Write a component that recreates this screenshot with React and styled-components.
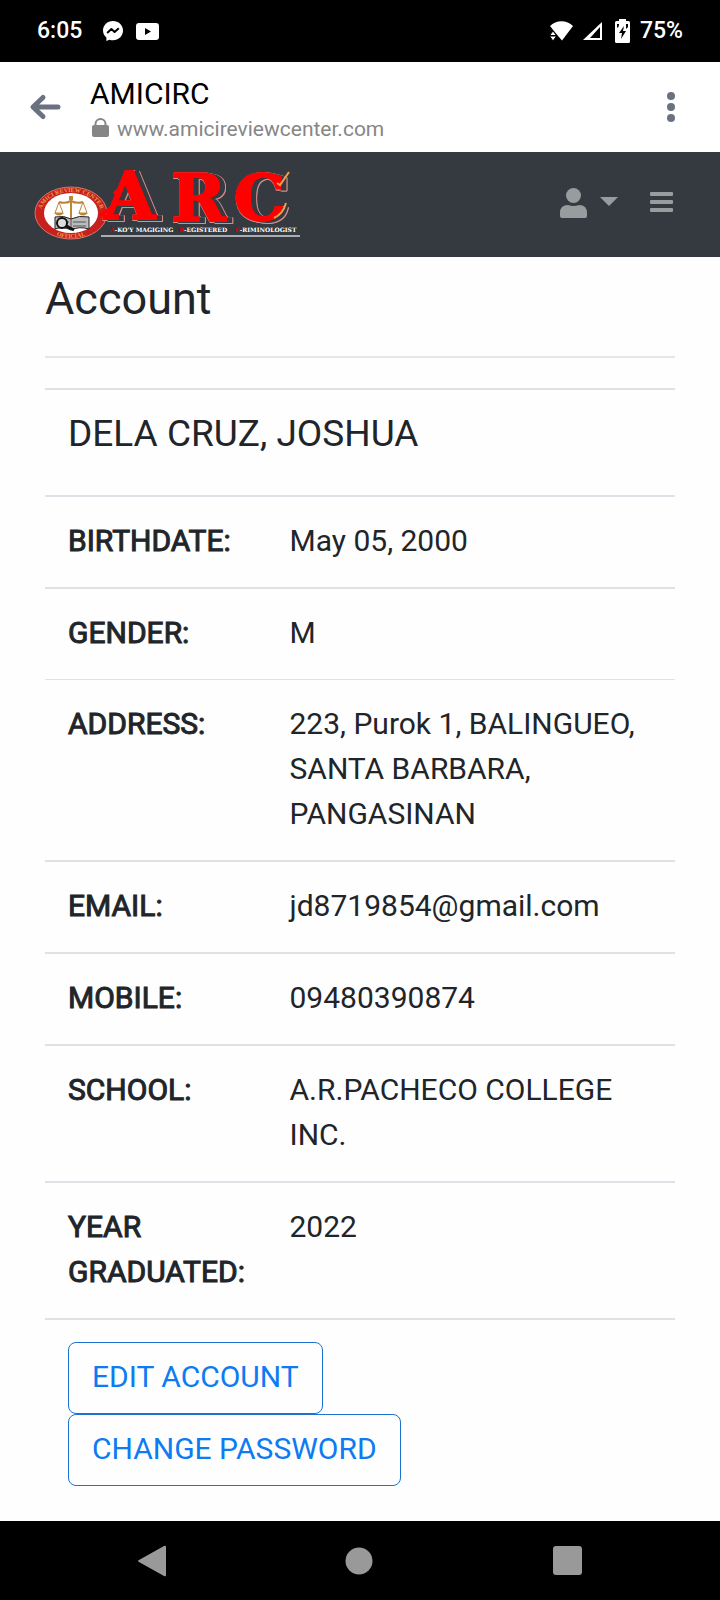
import React from 'react';
import styled, { createGlobalStyle } from 'styled-components';

const GlobalStyle = createGlobalStyle`
  * { box-sizing: border-box; }
  body {
    margin: 0;
    background: #fefefe;
    color: #212529;
    font-family: Roboto, "Liberation Sans", sans-serif;
    font-size: 30px;
    line-height: 45px;
  }
`;

const Screen = styled.div`
  display: flex;
  flex-direction: column;
  min-height: 100vh;
`;

const StatusBar = styled.header`
  display: flex;
  align-items: center;
  justify-content: space-between;
  height: 62px;
  padding: 0 37px;
  background: #000;
  color: #fff;
  font-size: 23px;
  font-weight: 500;
  line-height: 28px;
`;

const StatusGroup = styled.div`
  display: flex;
  align-items: center;
  gap: ${(p) => p.$gap}px;
`;

const Clock = styled.time`
  margin-right: 8px;
`;

const BrowserBar = styled.div`
  display: flex;
  align-items: center;
  height: 90px;
  padding: 0 28px;
  background: #fff;
`;

const IconButton = styled.button`
  display: flex;
  align-items: center;
  padding: 0;
  border: 0;
  background: none;
  color: ${(p) => p.$color || '#6a7181'};
  cursor: pointer;
`;

const PageInfo = styled.div`
  flex: 1;
  padding: 8px 0 0 28px;
`;

const PageTitle = styled.div`
  color: #000;
  font-size: 30px;
  line-height: 36px;
`;

const PageUrl = styled.div`
  display: flex;
  align-items: center;
  gap: 8px;
  padding-left: 2px;
  color: #868686;
  font-size: 21px;
  line-height: 34px;
`;

const Navbar = styled.nav`
  display: flex;
  align-items: center;
  justify-content: space-between;
  height: 105px;
  padding: 0 47px 0 30px;
  background: #343a40;
`;

const Brand = styled.a`
  display: flex;
`;

const LogoSvg = styled.svg`
  overflow: visible;
`;

const Letter = styled.text`
  fill: #f00;
  stroke: #f00;
  stroke-width: 2px;
  filter: drop-shadow(5px 1px 0 #343a40) drop-shadow(1px 0 0 #d98c8a) drop-shadow(0 1px 0 #d98c8a);
`;

const NavActions = styled.div`
  display: flex;
  align-items: center;
  gap: 32px;
  padding-bottom: 5px;
`;

const Main = styled.main`
  flex: 1;
  padding: 15px 45px 8px;
`;

const Heading = styled.h1`
  margin: 0;
  font-size: 45px;
  font-weight: 400;
  line-height: 54px;
`;

const Divider = styled.hr`
  height: 2px;
  margin: 30px 0;
  border: 0;
  background: #e6e6e6;
`;

const Details = styled.table`
  width: 100%;
  border-spacing: 0;
  table-layout: fixed;
`;

const LabelColumn = styled.col`
  width: 35%;
`;

const Cell = styled.td`
  padding: 21px 22px 24px 24px;
  border-top: ${(p) => (p.$thin ? 1 : 2)}px solid #dee2e6;
  vertical-align: top;
`;

const NameCell = styled(Cell)`
  padding: 21px 23px 39px;
`;

const LabelCell = styled(Cell)`
  padding-left: 23px;
  padding-right: 0;
  font-weight: 400;
  text-align: left;
  -webkit-text-stroke: 1px currentColor;
`;

const ActionsCell = styled(Cell)`
  padding: 22px 23px;
`;

const Name = styled.h2`
  margin: 0;
  font-size: 37px;
  font-weight: 400;
  line-height: 45px;
`;

const ActionButton = styled.button`
  display: block;
  padding: 11px 23px 14px;
  border: 1px solid #1b72d0;
  border-radius: 8px;
  background: transparent;
  color: #0d7bf2;
  font: inherit;
  cursor: pointer;
`;

const SystemNav = styled.footer`
  display: flex;
  align-items: center;
  justify-content: space-around;
  height: 79px;
  padding: 0 48px;
  background: #000;
`;

const Messenger = () => (
  <svg width="20" height="20" viewBox="0 0 20 20" aria-hidden="true">
    <path fill="#fff" d="M10 0C4.300 0 0 4.100 0 9.600c0 3 1.300 5.300 3.400 7V20l3-1.300c1.100.4 2.300.6 3.600.6 5.700 0 10-4.200 10-9.700S15.700 0 10 0Z" />
    <path fill="none" stroke="#000" strokeWidth="2" strokeLinejoin="round" d="m4.200 12 4.200-4 3.200 3 4.200-3.700" />
  </svg>
);

const YouTube = () => (
  <svg width="23" height="17" viewBox="0 0 23 17" aria-hidden="true">
    <rect width="23" height="17" rx="3" fill="#fff" />
    <path d="m9 5 6 3.500L9 12Z" />
  </svg>
);

const Wifi = () => (
  <svg width="23" height="20" viewBox="0 0 23 20" aria-hidden="true">
    <path fill="#fff" d="M0 5C6-1.500 17-1.500 23 5L12 19.500 6 12.500Z" />
    <path fill="#fff" stroke="#000" strokeWidth="1" d="M-.5 14.500 3 10l3.500 4.500Zm0 .5h7L3 20Z" />
  </svg>
);

const Signal = () => (
  <svg width="22" height="20" viewBox="0 0 22 20" aria-hidden="true">
    <path fill="#fff" d="M19 1v18H0Z" />
    <path d="M17 6v11H7Z" />
  </svg>
);

const Battery = () => (
  <svg width="15" height="24" viewBox="0 0 15 24" aria-hidden="true">
    <path fill="#fff" d="M4 0h7v2h2.500Q15 2 15 3.500v19q0 1.500-1.500 1.500h-12Q0 24 0 22.500v-19Q0 2 1.500 2H4Z" />
    <path d="M2 5h2v1L3 9 2 8Zm9 0h2v3l-2 2ZM9 7l-5 7h3l-1 6 5-8H8Z" />
  </svg>
);

const BackArrow = () => (
  <svg width="34" height="28" viewBox="0 0 34 28" fill="none" stroke="currentColor" strokeWidth="5" strokeLinecap="round" strokeLinejoin="round" aria-hidden="true">
    <path d="M15 4.500 5 14l10 9.500M5.500 14H30" />
  </svg>
);

const Dots = () => (
  <svg width="42" height="32" viewBox="0 0 42 32" fill="currentColor" aria-hidden="true">
    <circle cx="21" cy="5" r="4" />
    <circle cx="21" cy="16" r="4" />
    <circle cx="21" cy="27" r="4" />
  </svg>
);

const Lock = () => (
  <svg width="17" height="22" viewBox="0 0 17 22" aria-hidden="true">
    <rect y="7" width="17" height="12" rx="2" fill="currentColor" />
    <path d="M3.500 7V6a5 5 0 0 1 10 0v1" fill="none" stroke="currentColor" strokeWidth="2" />
  </svg>
);

const User = () => (
  <svg width="58" height="32" viewBox="0 -2 58 32" fill="currentColor" aria-hidden="true">
    <circle cx="13.500" cy="7.500" r="7.500" />
    <path d="M8 17q5.500 2 11 0 8 0 8 8v3q0 2-2 2H2q-2 0-2-2v-3q0-8 8-8ZM40 9h18l-9 9Z" />
  </svg>
);

const Menu = () => (
  <svg width="23" height="20" viewBox="0 0 23 20" fill="currentColor" aria-hidden="true">
    <rect width="23" height="4" rx="1" />
    <rect y="8" width="23" height="4" rx="1" />
    <rect y="16" width="23" height="4" rx="1" />
  </svg>
);

const letters = [
  { char: 'A', x: 74, y: 54, size: 66 },
  { char: 'R', x: 141, y: 56, size: 66 },
  { char: 'C', x: 204, y: 55, size: 64 },
];

const taglines = [
  { initial: 'A', rest: "-KO'Y MAGIGING", x: 80 },
  { initial: 'R', rest: '-EGISTERED', x: 149 },
  { initial: 'C', rest: '-RIMINOLOGIST', x: 205 },
];

const Logo = () => (
  <LogoSvg width="274" height="80" viewBox="0 0 274 80" role="img" aria-label="ARC">
    <defs>
      <path id="sealTop" d="M11 49a30 22 0 0 1 60 0" />
      <path id="sealBottom" d="M8 48a33 25 0 0 0 66 0" />
    </defs>
    <ellipse cx="41" cy="48" rx="36" ry="26" fill="#c8201c" stroke="#d9746c" />
    <ellipse cx="41" cy="48" rx="27" ry="20" fill="#fff" />
    <g fill="#e6a04c" fontFamily="Liberation Serif, serif" fontSize="6" fontWeight="700" textAnchor="middle">
      <text><textPath href="#sealTop" startOffset="50%">AMICI REVIEW CENTER</textPath></text>
      <text><textPath href="#sealBottom" startOffset="50%">OFFICIAL</textPath></text>
    </g>
    <g fill="none" stroke="#bd8735">
      <path strokeWidth="2" d="M41 34v25M29 37q6 2 12-1 6 3 12 1" />
      <path d="m29 37-4 11h8Zm24 0-4 11h8Z" />
    </g>
    <path fill="#bd8735" d="M24 48h10q-5 5-10 0Zm24 0h10q-5 5-10 0ZM39 31h4v4h-4Z" />
    <path fill="#bbb" stroke="#222" d="M25 52q9-2 16 2 8-4 18-2v12q-10-3-18 1-8-4-16-1Z" />
    <path fill="none" stroke="#555" d="M28 57h11m4 0h13M28 61h11m4 0h13M41 54v11" />
    <circle cx="32" cy="58" r="5" fill="#ddd" stroke="#111" strokeWidth="2" />
    <path stroke="#111" strokeWidth="3" d="m36 61 8 4" />
    <g fontFamily="DejaVu Serif, serif" fontWeight="700">
      {letters.map((l) => (
        <Letter key={l.char} x={l.x} y={l.y} fontSize={l.size}>{l.char}</Letter>
      ))}
    </g>
    <path fill="none" stroke="#f00" strokeWidth="4" d="m70 51 19-14M84 29l8-7" />
    <path fill="none" stroke="#efa04c" strokeWidth="2" d="m247 18 3 2 9-13M256 38q-3 11-12 15" />
    <g fill="#fff" fontFamily="DejaVu Serif, serif" fontSize="6" fontWeight="700">
      {taglines.map((t) => (
        <text key={t.initial} x={t.x} y="67">
          <tspan fill="#d00">{t.initial}</tspan>{t.rest}
        </text>
      ))}
    </g>
    <rect x="71" y="70" width="199" height="2" fill="#aaadb0" />
  </LogoSvg>
);

const rows = [
  { label: 'BIRTHDATE:', value: 'May 05, 2000' },
  { label: 'GENDER:', value: 'M' },
  { label: 'ADDRESS:', value: '223, Purok 1, BALINGUEO, SANTA BARBARA, PANGASINAN', thin: true },
  { label: 'EMAIL:', value: 'jd8719854@gmail.com' },
  { label: 'MOBILE:', value: '09480390874' },
  { label: 'SCHOOL:', value: 'A.R.PACHECO COLLEGE INC.' },
  { label: 'YEAR GRADUATED:', value: '2022' },
];

export default function App() {
  return (
    <Screen>
      <GlobalStyle />
      <StatusBar>
        <StatusGroup $gap={13}>
          <Clock>6:05</Clock>
          <Messenger />
          <YouTube />
        </StatusGroup>
        <StatusGroup $gap={10}>
          <Wifi />
          <Signal />
          <Battery />
          <span>75%</span>
        </StatusGroup>
      </StatusBar>
      <BrowserBar>
        <IconButton aria-label="Back"><BackArrow /></IconButton>
        <PageInfo>
          <PageTitle>AMICIRC</PageTitle>
          <PageUrl><Lock />www.amicireviewcenter.com</PageUrl>
        </PageInfo>
        <IconButton aria-label="More options"><Dots /></IconButton>
      </BrowserBar>
      <Navbar>
        <Brand href="#"><Logo /></Brand>
        <NavActions>
          <IconButton $color="#999c9f" aria-label="User menu"><User /></IconButton>
          <IconButton $color="#999c9f" aria-label="Toggle navigation"><Menu /></IconButton>
        </NavActions>
      </Navbar>
      <Main>
        <Heading>Account</Heading>
        <Divider />
        <Details>
          <colgroup>
            <LabelColumn />
            <col />
          </colgroup>
          <tbody>
            <tr>
              <NameCell colSpan={2}><Name>DELA CRUZ, JOSHUA</Name></NameCell>
            </tr>
            {rows.map(({ label, value, thin }) => (
              <tr key={label}>
                <LabelCell as="th" scope="row" $thin={thin}>{label}</LabelCell>
                <Cell $thin={thin}>{value}</Cell>
              </tr>
            ))}
            <tr>
              <ActionsCell colSpan={2}>
                <ActionButton>EDIT ACCOUNT</ActionButton>
                <ActionButton>CHANGE PASSWORD</ActionButton>
              </ActionsCell>
            </tr>
          </tbody>
        </Details>
      </Main>
      <SystemNav>
        <IconButton $color="#999" aria-label="Back">
          <svg width="28" height="32" viewBox="0 0 28 32" fill="currentColor"><path d="M26 1q2-1 2 1v28q0 2-2 1L1 17q-2-1 0-2Z" /></svg>
        </IconButton>
        <IconButton $color="#999" aria-label="Home">
          <svg width="28" height="28" viewBox="0 0 28 28" fill="currentColor"><circle cx="14" cy="14" r="13.500" /></svg>
        </IconButton>
        <IconButton $color="#999" aria-label="Recent apps">
          <svg width="29" height="29" viewBox="0 0 29 29" fill="currentColor"><rect width="29" height="29" rx="3" /></svg>
        </IconButton>
      </SystemNav>
    </Screen>
  );
}
